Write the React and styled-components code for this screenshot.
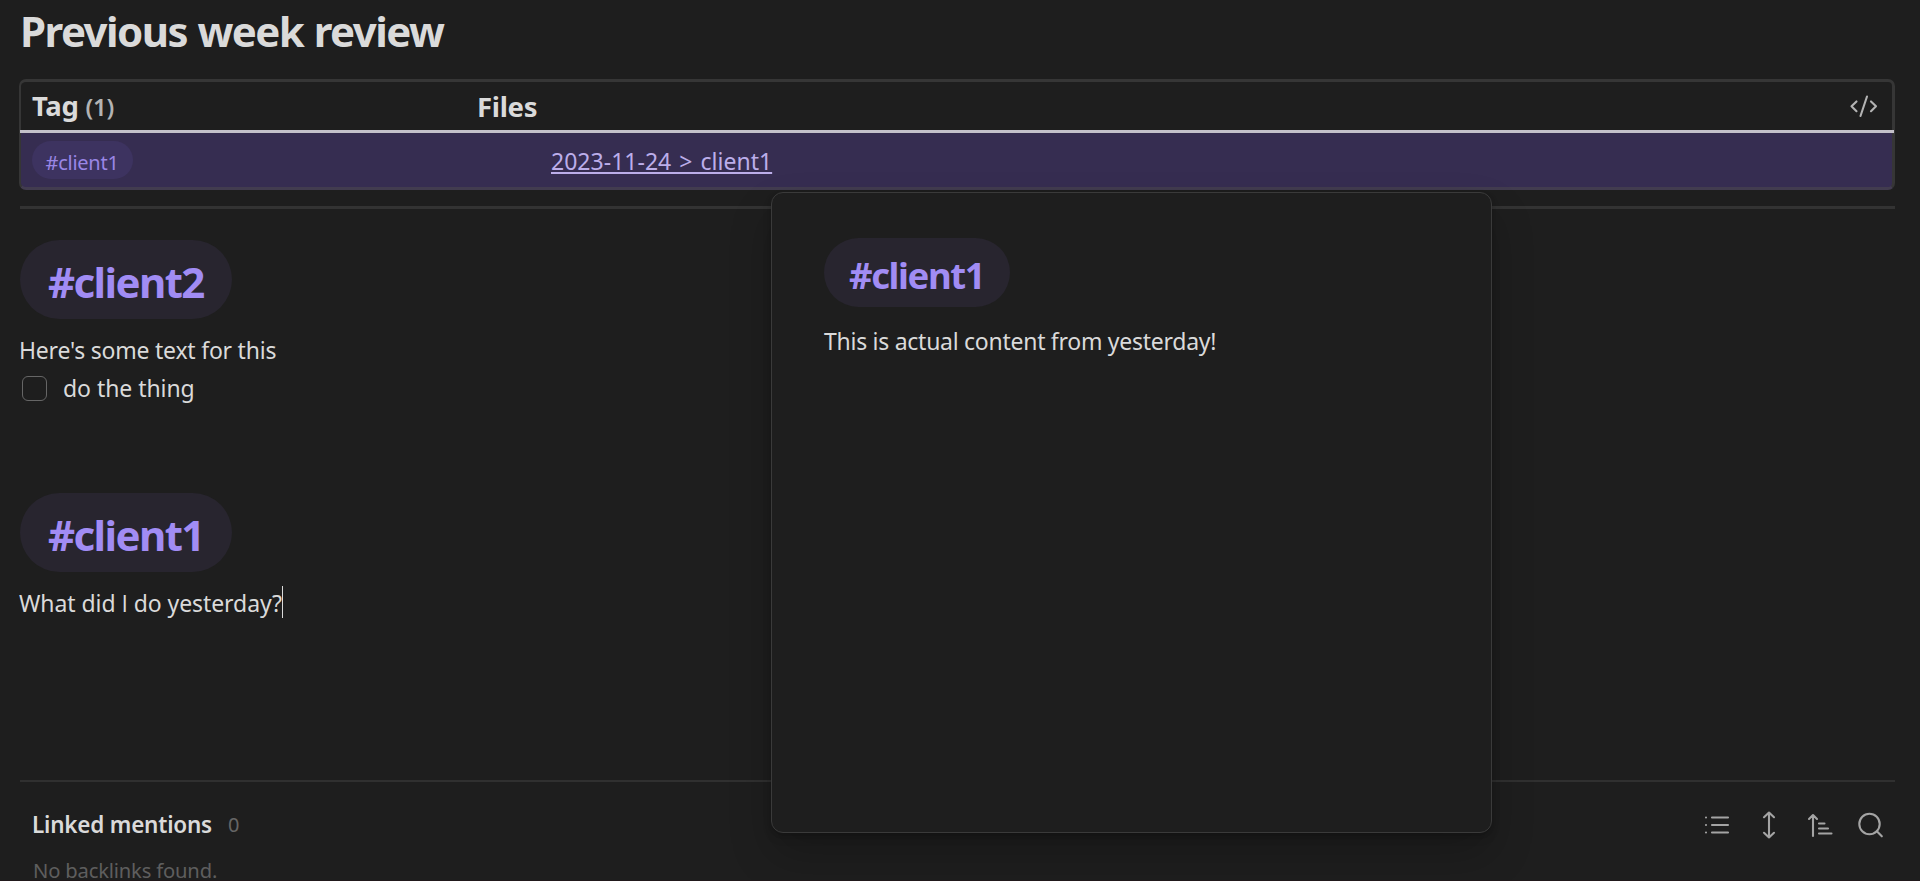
import React from "react";
import styled, { createGlobalStyle } from "styled-components";

const Global = createGlobalStyle`
  * { box-sizing: border-box; }
  body { margin: 0; background: #1e1e1e; overflow: hidden; }
`;

const Page = styled.main`
  position: relative;
  display: flex;
  flex-direction: column;
  width: 1920px;
  height: 881px;
  padding: 0 25px 0 19px;
  overflow: hidden;
  background: #1e1e1e;
  border-bottom: 1px solid #21191b;
  color: #dadada;
  font-family: "Noto Sans", "Open Sans", sans-serif;
  font-size: 23px;
  white-space: pre;
`;

const Title = styled.h1`
  margin: 2px 0 20px;
  padding-left: 1px;
  font-size: 42px;
  line-height: 57px;
  font-weight: 700;
  letter-spacing: -1.55px;
  word-spacing: 1px;
`;

const TagTable = styled.section`
  height: 111px;
  flex: none;
  border: 3px solid #363636;
  border-left-width: 2px;
  border-bottom-color: #423c4f;
  border-radius: 7px;
  background: linear-gradient(#1e1e1e 48px, #362d51 48px);
`;

const TableHeader = styled.div`
  display: flex;
  align-items: center;
  height: 51px;
  margin: 0 -2px 0 -1px;
  padding: 0 16px 0 12px;
  border-bottom: 3px solid #c4c1ca;
`;

const ColumnTitle = styled.div`
  width: ${(p) => p.$width || "auto"};
  padding-top: 1px;
  font-size: 27.5px;
  line-height: 48px;
  font-weight: 700;
  letter-spacing: -0.3px;
`;

const Count = styled.span`
  color: #b3b3b3;
  font-size: 24px;
  font-weight: 600;
`;

const CodeIcon = styled.svg`
  margin-left: auto;
`;

const TableRow = styled.div`
  display: flex;
  align-items: center;
  height: 54px;
  padding-left: 11px;
`;

const SmallTag = styled.span`
  width: 101px;
  height: 38px;
  margin-right: 418px;
  padding-left: 13.5px;
  border-radius: 19px;
  background: #3d3360;
  color: #9a86e6;
  font-size: 20px;
  line-height: 43px;
  letter-spacing: -0.25px;
`;

const FileLink = styled.a`
  padding-top: 2px;
  color: #bcaeea;
  line-height: 30px;
  letter-spacing: 0.02px;
  word-spacing: 2px;
  text-decoration: underline;
  text-decoration-thickness: 2px;
  text-underline-offset: 2px;
`;

const Rule = styled.hr`
  width: 1875px;
  height: ${(p) => p.$weight}px;
  flex: none;
  margin: ${(p) => p.$gap}px 0 0 1px;
  border: 0;
  background: ${(p) => p.$tone};
`;

const Note = styled.article`
  height: ${(p) => p.$height}px;
  flex: none;
  padding-top: 31px;
`;

const HeadingTag = styled.h2`
  width: ${(p) => (p.$compact ? 186 : 212)}px;
  height: ${(p) => (p.$compact ? 69 : 79)}px;
  margin: 0 0 0 ${(p) => (p.$compact ? 0 : 1)}px;
  padding-left: ${(p) => (p.$compact ? 25 : 28)}px;
  border-radius: 40px;
  background: #28252f;
  color: #a18cf4;
  font-size: ${(p) => (p.$compact ? 36.5 : 42)}px;
  line-height: ${(p) => (p.$compact ? 74 : 84)}px;
  font-weight: 700;
  letter-spacing: ${(p) => (p.$compact ? -1.4 : -1.6)}px;
`;

const Line = styled.p`
  display: flex;
  align-items: center;
  height: 38px;
  margin: ${(p) => p.$top || 0}px 0 0;
  line-height: 38px;
  letter-spacing: ${(p) => p.$track || "-0.22px"};
`;

const PlainCapital = styled.span`
  font-family: "Open Sans", sans-serif;
`;

const Checkbox = styled.span`
  width: 25px;
  height: 25px;
  margin: 1px 16px 0 3px;
  border: 1.5px solid #666;
  border-radius: 6px;
`;

const Caret = styled.span`
  width: 1px;
  height: 32px;
  margin-top: -3px;
  background: #dadada;
`;

const Mentions = styled.footer`
  display: flex;
  align-items: center;
  height: 40px;
  flex: none;
  margin-top: 22px;
  padding: 0 9px 0 13px;
`;

const MentionsTitle = styled.span`
  font-size: 22.5px;
  font-weight: 600;
  letter-spacing: -0.22px;
`;

const MentionsCount = styled.span`
  margin-left: 16px;
  color: #666;
  font-size: 20px;
`;

const Tools = styled.div`
  display: flex;
  align-items: center;
  gap: 21px;
  margin-left: auto;
  padding-top: 2px;
`;

const Empty = styled.div`
  flex: none;
  margin-top: 8px;
  padding-left: 14px;
  color: #5e5e5e;
  font-size: 20.2px;
  line-height: 36px;
  letter-spacing: -0.18px;
`;

const Popover = styled.aside`
  position: absolute;
  left: 771px;
  top: 192px;
  width: 721px;
  height: 641px;
  padding: 45px 52px;
  border: 1px solid #3a3a3a;
  border-radius: 12px;
  background: #1e1e1e;
  box-shadow: 0 2px 4px rgba(0, 0, 0, 0.12), 0 5px 10px rgba(0, 0, 0, 0.12),
    0 22px 44px rgba(0, 0, 0, 0.2);
`;

function ToolIcon({ children }) {
  return (
    <svg width="30" height="30" viewBox="0 0 30 30" fill="none" stroke="#a4a4a4" strokeWidth="2.1" strokeLinecap="round" strokeLinejoin="round">
      {children}
    </svg>
  );
}

export default function App() {
  return (
    <Page>
      <Global />
      <Title>Previous week review</Title>
      <TagTable>
        <TableHeader>
          <ColumnTitle $width="445px">
            Tag <Count>(1)</Count>
          </ColumnTitle>
          <ColumnTitle>Files</ColumnTitle>
          <CodeIcon width="28" height="24" viewBox="0 0 28 24" fill="none" stroke="#b3b3b3" strokeWidth="2.1" strokeLinecap="round" strokeLinejoin="round">
            <path d="M6.5 7.4 1.5 12.3l5 4.9M21 7.4l5 4.9-5 4.9M17 2.5l-6.5 19.5" />
          </CodeIcon>
        </TableHeader>
        <TableRow>
          <SmallTag>#client1</SmallTag>
          <FileLink>2023-11-24 &gt; client1</FileLink>
        </TableRow>
      </TagTable>
      <Rule $weight={3} $gap={16} $tone="#333333" />

      <Note $height={253}>
        <HeadingTag>#client2</HeadingTag>
        <Line $top={12}>Here's some text for this</Line>
        <Line $track="-0.05px">
          <Checkbox />
          do the thing
        </Line>
      </Note>
      <Note $height={287}>
        <HeadingTag>#client1</HeadingTag>
        <Line $top={12} $track="-0.07px">
          What did <PlainCapital>I</PlainCapital> do yesterday?
          <Caret />
        </Line>
      </Note>

      <Rule $weight={2} $gap={31} $tone="#303030" />
      <Mentions>
        <MentionsTitle>Linked mentions</MentionsTitle>
        <MentionsCount>0</MentionsCount>
        <Tools>
          <ToolIcon>
            <path d="M9 7.5h16M9 15h16M9 22.5h16M3 7.5h.01M3 15h.01M3 22.5h.01" />
          </ToolIcon>
          <ToolIcon>
            <path d="M15 2.5v25M10 7.2 15 2.5l5 4.7M10 22.8l5 4.7 5-4.7" />
          </ToolIcon>
          <ToolIcon>
            <path d="M8 26V5M4 9l4-4 4 4M14 13.5h5.5M14 18.5h9M14 23.5h12.5" />
          </ToolIcon>
          <ToolIcon>
            <circle cx="13.5" cy="14" r="10.2" />
            <path d="m20.8 21.3 5 5" />
          </ToolIcon>
        </Tools>
      </Mentions>
      <Empty>No backlinks found.</Empty>

      <Popover>
        <HeadingTag $compact>#client1</HeadingTag>
        <Line $top={15} $track="-0.27px">This is actual content from yesterday!</Line>
      </Popover>
    </Page>
  );
}
